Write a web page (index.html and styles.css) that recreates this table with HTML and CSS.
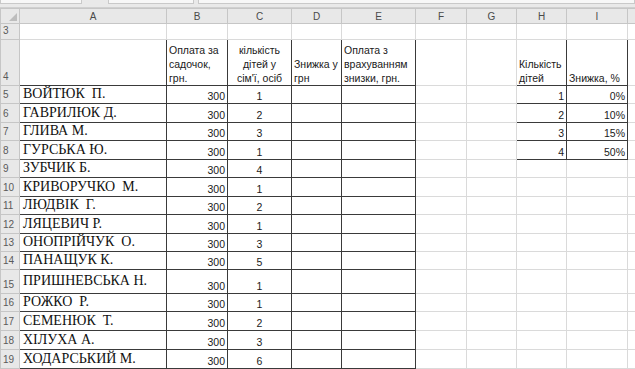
FILE: index.html
```html
<!DOCTYPE html>
<html lang="uk">
<head>
<meta charset="utf-8">
<title>Знижка</title>
<link rel="stylesheet" href="styles.css">
</head>
<body>
<div class="app">
  <div class="topbar">
    <span class="tb-box tb-name"></span>
    <span class="tb-box tb-mid"></span>
    <span class="tb-box tb-formula"></span>
  </div>
  <table class="sheet">
    <colgroup>
      <col class="c-rh"><col class="c-a"><col class="c-b"><col class="c-c"><col class="c-d"><col class="c-e"><col class="c-f"><col class="c-g"><col class="c-h"><col class="c-i"><col class="c-j">
    </colgroup>
    <thead>
      <tr class="r-head">
        <th class="corner"><span class="tri"></span></th><th>A</th><th>B</th><th>C</th><th>D</th><th>E</th><th>F</th><th>G</th><th>H</th><th>I</th><th></th>
      </tr>
    </thead>
    <tbody>
      <tr class="r-3"><th class="rn">3</th><td></td><td></td><td></td><td></td><td></td><td></td><td></td><td></td><td></td><td></td></tr>
      <tr class="r-4">
        <th class="rn">4</th>
        <td class="bx"></td>
        <td class="bx txt">Оплата за<br>садочок,<br>грн.</td>
        <td class="bx txt ctr">кількість<br>дітей у<br>сім'ї, осіб</td>
        <td class="bx txt">Знижка у<br>грн</td>
        <td class="bx txt">Оплата з<br>врахуванням<br>знизки, грн.</td>
        <td></td><td></td>
        <td class="bx txt">Кількість<br>дітей</td>
        <td class="bx txt">Знижка, %</td>
        <td></td>
      </tr>
      <tr class="r-a"><th class="rn">5</th><td class="bx nm">ВОЙТЮК  П.</td><td class="bx num">300</td><td class="bx ctr">1</td><td class="bx"></td><td class="bx"></td><td></td><td></td><td class="bx num">1</td><td class="bx num">0%</td><td></td></tr>
      <tr class="r-b"><th class="rn">6</th><td class="bx nm">ГАВРИЛЮК Д.</td><td class="bx num">300</td><td class="bx ctr">2</td><td class="bx"></td><td class="bx"></td><td></td><td></td><td class="bx num">2</td><td class="bx num">10%</td><td></td></tr>
      <tr class="r-a"><th class="rn">7</th><td class="bx nm">ГЛИВА М.</td><td class="bx num">300</td><td class="bx ctr">3</td><td class="bx"></td><td class="bx"></td><td></td><td></td><td class="bx num">3</td><td class="bx num">15%</td><td></td></tr>
      <tr class="r-b"><th class="rn">8</th><td class="bx nm">ГУРСЬКА Ю.</td><td class="bx num">300</td><td class="bx ctr">1</td><td class="bx"></td><td class="bx"></td><td></td><td></td><td class="bx num">4</td><td class="bx num">50%</td><td></td></tr>
      <tr class="r-a"><th class="rn">9</th><td class="bx nm">ЗУБЧИК Б.</td><td class="bx num">300</td><td class="bx ctr">4</td><td class="bx"></td><td class="bx"></td><td></td><td></td><td></td><td></td><td></td></tr>
      <tr class="r-b"><th class="rn">10</th><td class="bx nm">КРИВОРУЧКО  М.</td><td class="bx num">300</td><td class="bx ctr">1</td><td class="bx"></td><td class="bx"></td><td></td><td></td><td></td><td></td><td></td></tr>
      <tr class="r-a"><th class="rn">11</th><td class="bx nm">ЛЮДВІК  Г.</td><td class="bx num">300</td><td class="bx ctr">2</td><td class="bx"></td><td class="bx"></td><td></td><td></td><td></td><td></td><td></td></tr>
      <tr class="r-b"><th class="rn">12</th><td class="bx nm">ЛЯЦЕВИЧ Р.</td><td class="bx num">300</td><td class="bx ctr">1</td><td class="bx"></td><td class="bx"></td><td></td><td></td><td></td><td></td><td></td></tr>
      <tr class="r-a"><th class="rn">13</th><td class="bx nm">ОНОПРІЙЧУК  О.</td><td class="bx num">300</td><td class="bx ctr">3</td><td class="bx"></td><td class="bx"></td><td></td><td></td><td></td><td></td><td></td></tr>
      <tr class="r-a"><th class="rn">14</th><td class="bx nm">ПАНАЩУК К.</td><td class="bx num">300</td><td class="bx ctr">5</td><td class="bx"></td><td class="bx"></td><td></td><td></td><td></td><td></td><td></td></tr>
      <tr class="r-tall"><th class="rn">15</th><td class="bx nm nm-tall">ПРИШНЕВСЬКА Н.</td><td class="bx num">300</td><td class="bx ctr">1</td><td class="bx"></td><td class="bx"></td><td></td><td></td><td></td><td></td><td></td></tr>
      <tr class="r-a"><th class="rn">16</th><td class="bx nm">РОЖКО  Р.</td><td class="bx num">300</td><td class="bx ctr">1</td><td class="bx"></td><td class="bx"></td><td></td><td></td><td></td><td></td><td></td></tr>
      <tr class="r-b"><th class="rn">17</th><td class="bx nm">СЕМЕНЮК  Т.</td><td class="bx num">300</td><td class="bx ctr">2</td><td class="bx"></td><td class="bx"></td><td></td><td></td><td></td><td></td><td></td></tr>
      <tr class="r-b"><th class="rn">18</th><td class="bx nm">ХІЛУХА А.</td><td class="bx num">300</td><td class="bx ctr">3</td><td class="bx"></td><td class="bx"></td><td></td><td></td><td></td><td></td><td></td></tr>
      <tr class="r-b"><th class="rn">19</th><td class="bx nm">ХОДАРСЬКИЙ М.</td><td class="bx num">300</td><td class="bx ctr">6</td><td class="bx"></td><td class="bx"></td><td></td><td></td><td></td><td></td><td></td></tr>
    </tbody>
  </table>
  <div class="bottombar"><span class="sheet-tab"></span></div>
</div>
</body>
</html>
```

FILE: styles.css
```css
* { box-sizing: border-box; }

html, body {
  margin: 0;
  padding: 0;
  background: #ffffff;
}

.app {
  width: 635px;
  height: 369px;
  overflow: hidden;
  display: flex;
  flex-direction: column;
  background: #ffffff;
  font-family: "Liberation Sans", Arial, sans-serif;
}

.topbar {
  height: 8px;
  flex: none;
  display: flex;
  gap: 4px;
  background: #e9e9e9;
  border-bottom: 1px solid #d0d0d0;
}

.tb-box {
  display: block;
  height: 4px;
  background: #f7f7f7;
  border: 1px solid #c9c9c9;
  border-top: none;
}

.tb-name { width: 82px; }
.tb-mid { width: 86px; margin-left: 22px; }
.tb-formula { flex: 1; }

.sheet {
  flex: none;
  border-collapse: collapse;
  table-layout: fixed;
  width: 687px;
}

.c-rh { width: 19px; }
.c-a { width: 147px; }
.c-b { width: 61px; }
.c-c { width: 64px; }
.c-d { width: 50px; }
.c-e { width: 74px; }
.c-f { width: 51px; }
.c-g { width: 50px; }
.c-h { width: 50px; }
.c-i { width: 61px; }
.c-j { width: 60px; }

.sheet td,
.sheet th {
  border: 1px solid #dadada;
  padding: 0 2px;
  vertical-align: bottom;
  overflow: visible;
  white-space: nowrap;
  font-size: 10.5px;
  line-height: 14px;
  color: #1a1a1a;
}

.sheet .r-head th {
  height: 15px;
  background: #e8e8e8;
  border-color: #c6c6c6;
  color: #4a4a4a;
  font-weight: normal;
  font-size: 10px;
  line-height: 13px;
  text-align: center;
  vertical-align: middle;
}

.corner { position: relative; }
.tri {
  position: absolute;
  right: 2px;
  bottom: 2px;
  width: 0;
  height: 0;
  border-left: 8px solid transparent;
  border-bottom: 8px solid #bdbdbd;
}

.sheet th.rn {
  background: #e8e8e8;
  border-color: #c6c6c6;
  color: #5a5a5a;
  font-weight: normal;
  font-size: 10px;
  text-align: left;
  padding: 0 0 1px 2px;
}

.r-3 td, .r-3 th { height: 14px; }
.r-4 td, .r-4 th { height: 46px; }
.r-a td, .r-a th { height: 18px; }
.r-b td, .r-b th { height: 19px; }
.r-tall td, .r-tall th { height: 24px; }

.sheet td.bx { border-color: #3a3a3a; }

.ctr { text-align: center; }
.num { text-align: right; }

.sheet td.nm {
  font-family: "Liberation Serif", "Times New Roman", serif;
  font-size: 14px;
  line-height: 16px;
  color: #111111;
  white-space: pre;
  padding: 0 0 1px 3px;
}

.sheet td.nm-tall { padding-bottom: 4px; }

.bottombar {
  flex: 1;
  background: #dcdcdc;
  display: flex;
  align-items: flex-end;
  padding-left: 135px;
}

.sheet-tab {
  display: block;
  width: 57px;
  height: 2px;
  background: #ffffff;
}
```
